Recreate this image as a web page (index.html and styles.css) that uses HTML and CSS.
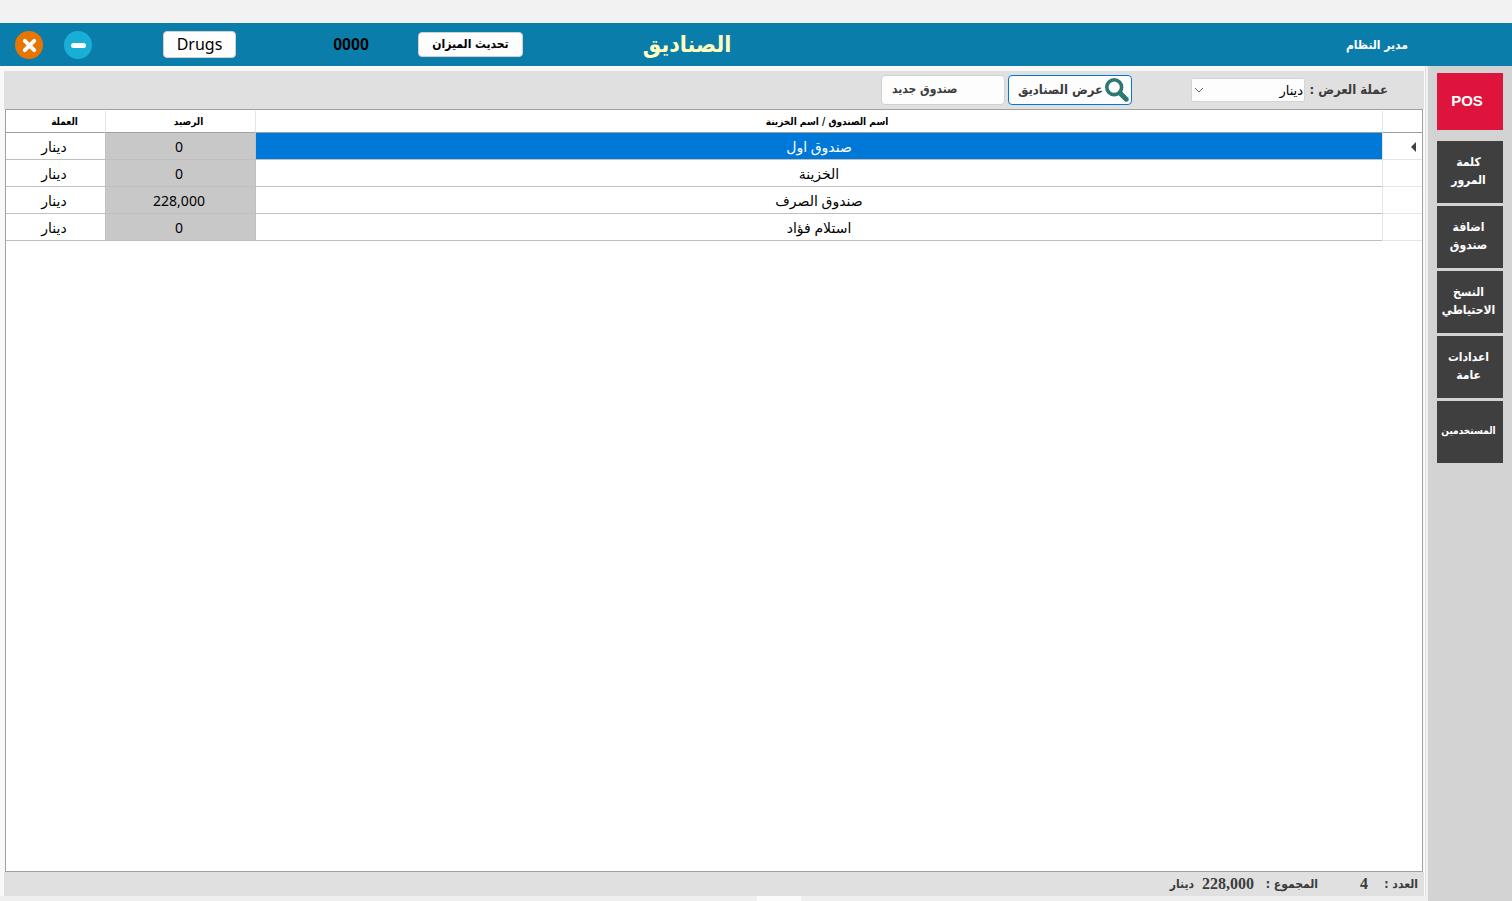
FILE: index.html
```html
<!DOCTYPE html>
<html lang="ar" dir="rtl">
<head>
<meta charset="utf-8">
<title>الصناديق</title>
<link rel="stylesheet" href="styles.css">
</head>
<body>
<div class="app">
  <header class="titlebar" dir="ltr">
    <button class="round round-close" type="button" aria-label="إغلاق">
      <svg viewBox="0 0 28 28"><path d="M9.8 9.8l9.4 9.4M19.2 9.8l-9.4 9.4"/></svg>
    </button>
    <button class="round round-min" type="button" aria-label="تصغير">
      <svg viewBox="0 0 28 28"><path d="M9.5 14.5h10"/></svg>
    </button>
    <button class="head-btn drugs" type="button">Drugs</button>
    <span class="counter">0000</span>
    <button class="head-btn update" type="button" dir="rtl">تحديث الميزان</button>
    <h1 class="title" dir="rtl">الصناديق</h1>
    <span class="user" dir="rtl">مدير النظام</span>
  </header>

  <div class="body">
    <nav class="side">
      <button class="side-btn pos" type="button">POS</button>
      <button class="side-btn" type="button">كلمة<br>المرور</button>
      <button class="side-btn" type="button">اضافة<br>صندوق</button>
      <button class="side-btn" type="button">النسخ<br>الاحتياطي</button>
      <button class="side-btn" type="button">اعدادات<br>عامة</button>
      <button class="side-btn small" type="button">المستخدمين</button>
    </nav>

    <main class="main">
      <div class="toolbar">
        <label class="currency-label" for="currency">عملة العرض :</label>
        <div class="select">
          <select id="currency"><option>دينار</option></select>
          <svg viewBox="0 0 10 6"><path d="M1 1l4 4 4-4"/></svg>
        </div>
        <button class="tool-btn show" type="button">
          <svg viewBox="0 0 24 24"><circle cx="9.2" cy="9.2" r="7.4"/><path d="M15 15l6.2 6.2"/></svg>
          <span>عرض الصناديق</span>
        </button>
        <button class="tool-btn new" type="button">صندوق جديد</button>
      </div>

      <div class="grid">
        <table class="table">
          <colgroup><col class="c-mark"><col><col class="c-balance"><col class="c-currency"></colgroup>
          <thead>
            <tr><th></th><th>اسم الصندوق / اسم الخزينة</th><th>الرصيد</th><th>العملة</th></tr>
          </thead>
          <tbody>
            <tr class="selected"><td class="mark"><svg viewBox="0 0 5 10"><path d="M5 0v10L0 5z"/></svg></td><td>صندوق اول</td><td class="balance">0</td><td class="cur">دينار</td></tr>
            <tr><td class="mark"></td><td>الخزينة</td><td class="balance">0</td><td class="cur">دينار</td></tr>
            <tr><td class="mark"></td><td>صندوق الصرف</td><td class="balance">228,000</td><td class="cur">دينار</td></tr>
            <tr><td class="mark"></td><td>استلام فؤاد</td><td class="balance">0</td><td class="cur">دينار</td></tr>
          </tbody>
        </table>
      </div>

      <footer class="totals">
        <span class="t-label">العدد :</span>
        <span class="t-count">4</span>
        <span class="t-sum">المجموع :</span>
        <span class="t-value">228,000</span>
        <span>دينار</span>
      </footer>
      <div class="tab-strip" dir="ltr"><span class="tab"></span></div>
    </main>
  </div>
</div>
</body>
</html>
```
FILE: styles.css
```css
* { box-sizing: border-box; }

body {
  --bold-face: "DejaVu Sans Condensed", "DejaVu Sans", sans-serif;
  margin: 0;
  background: #f2f2f2;
  color: #000;
  font-family: "Noto Sans", "DejaVu Sans", sans-serif;
  font-size: 14px;
}

button, select { font: inherit; color: inherit; margin: 0; padding: 0; }

.app {
  display: flex;
  flex-direction: column;
  min-height: 100vh;
  padding-top: 23px;
}

/* Title bar */
.titlebar {
  display: flex;
  align-items: center;
  height: 43px;
  padding: 0 104px 0 15px;
  background: #0b7dab;
  white-space: nowrap;
}
.round {
  width: 28px;
  height: 28px;
  border: 0;
  border-radius: 50%;
}
.round svg { display: block; width: 28px; height: 28px; fill: none; stroke: #fff; stroke-linecap: round; stroke-width: 4; }
.round-close { background: #e87500; margin-right: 21px; }
.round-min { background: #18aed6; margin-right: 71px; }
.round-min svg { stroke-width: 5; }
.head-btn {
  background: #fdfdfd;
  border: 1px solid #d0d0d0;
  border-radius: 4px;
}
.drugs { width: 73px; height: 27px; font-size: 16px; line-height: 24px; padding-bottom: 2px; margin-right: 65px; }
.counter { width: 100px; text-align: center; font: bold 16px "Liberation Sans", sans-serif; margin-right: 17px; }
.update { width: 105px; height: 25px; padding-bottom: 2px; font: bold 12px var(--bold-face); margin-right: 64px; }
.title { width: 200px; margin: 0; padding-bottom: 2px; text-align: center; color: #ffffc0; font: bold 23px var(--bold-face); }
.user { margin-left: auto; color: #fff; font: bold 12px var(--bold-face); }

/* Body */
.body { display: flex; flex: 1; }
.side {
  display: flex;
  flex-direction: column;
  gap: 3px;
  width: 84px;
  flex: none;
  padding: 7px 9px;
  background: #d3d3d3;
}
.side-btn {
  height: 62px;
  padding: 0 3px 2px 0;
  border: 0;
  background: #3f3f3f;
  color: #fff;
  font: bold 12px/18px var(--bold-face);
  white-space: nowrap;
}
.side-btn.pos {
  height: 57px;
  margin-bottom: 8px;
  padding-right: 6px;
  background: #df143c;
  font: bold 15px "Liberation Sans", sans-serif;
}
.side-btn.small { font-size: 10px; }

.main {
  display: flex;
  flex-direction: column;
  flex: 1;
  min-width: 0;
  padding: 5px 4px 0;
  background: #f8f8f8;
  box-shadow: inset -2px 0 #f0f0f0, inset -3px 0 #e2e2e2;
}
.toolbar {
  display: flex;
  align-items: flex-start;
  height: 38px;
  padding: 4px 36px 0 0;
  background: #e0e0e0;
  color: #3c3c3c;
  font: bold 13px var(--bold-face);
  white-space: nowrap;
}
.currency-label { width: 76px; margin: 3px 0 0 7px; line-height: 24px; }
.select {
  display: grid;
  align-items: center;
  width: 114px;
  height: 24px;
  margin: 3px 0 0 59px;
}
.select select {
  grid-area: 1 / 1;
  width: 100%;
  height: 24px;
  padding: 0 1px;
  appearance: none;
  background: #fdfdfd;
  border: 1px solid #d4d4d4;
  border-radius: 2px;
  color: #000;
  font: 13px "DejaVu Sans", sans-serif;
}
.select svg {
  grid-area: 1 / 1;
  justify-self: end;
  width: 10px;
  height: 6px;
  margin-left: 3px;
  fill: none;
  stroke: #666;
  pointer-events: none;
}
.tool-btn {
  display: flex;
  align-items: center;
  width: 124px;
  height: 30px;
  background: #fdfdfd;
  border: 1px solid #d0d0d0;
  border-radius: 4px;
  font-size: 12px;
}
.tool-btn.show { margin-left: 3px; padding-right: 2px; gap: 2px; border-color: #0078d7; font-size: 13px; }
.tool-btn.show span { padding-bottom: 2px; }
.tool-btn.show svg { width: 24px; height: 24px; flex: none; fill: none; stroke: #2f7872; stroke-width: 3.6; stroke-linecap: round; }
.tool-btn.show path { stroke-width: 5; }
.tool-btn.new { justify-content: flex-end; padding: 0 0 2px 10px; }

/* Data grid */
.grid {
  flex: 1;
  margin: 0 1px;
  padding-top: 1px;
  background: #fff;
  border: 1px solid #a0a0a0;
}
.table { width: 100%; border-collapse: separate; border-spacing: 0; table-layout: fixed; }
.c-mark { width: 40px; }
.c-balance { width: 150px; }
.c-currency { width: 99px; }
.table th {
  height: 22px;
  padding: 0 0 1px 16px;
  border-bottom: 1px solid #a0a0a0;
  border-left: 1px solid #e5e5e5;
  font: bold 10px var(--bold-face);
}
.table td {
  height: 27px;
  padding: 2px 0 0;
  border-bottom: 1px solid #c0c0c0;
  border-left: 1px solid #c0c0c0;
  text-align: center;
  font-size: 14px;
  line-height: 20px;
}
.table th:last-child, .table td:last-child { border-left: 0; }
.table th:last-child { padding-left: 18px; }
.table .mark { border-color: #e5e5e5; }
.mark svg { display: block; width: 5px; height: 10px; margin-right: 6px; fill: #3f3f3f; }
.table .balance { background: #c8c8c8; padding-right: 3px; padding-bottom: 1px; }
.table .cur { padding-right: 3px; }
.selected td:nth-child(2) { background: #0078d7; color: #fff; }

/* Totals */
.totals {
  display: flex;
  height: 24px;
  padding-right: 6px;
  background: #e0e0e0;
  color: #3c3c3c;
  font: bold 12px/24px var(--bold-face);
  white-space: nowrap;
}
.t-label { width: 50px; }
.t-count { width: 50px; }
.t-sum { width: 64px; }
.t-value { width: 60px; }
.t-count, .t-value { font-family: "Liberation Serif", serif; font-size: 16px; }
.tab-strip { display: flex; height: 5px; margin: 0 -4px; padding-left: 50%; background: #efefef; }
.tab { width: 44px; margin-left: 47px; background: #fbfbfb; }
```
